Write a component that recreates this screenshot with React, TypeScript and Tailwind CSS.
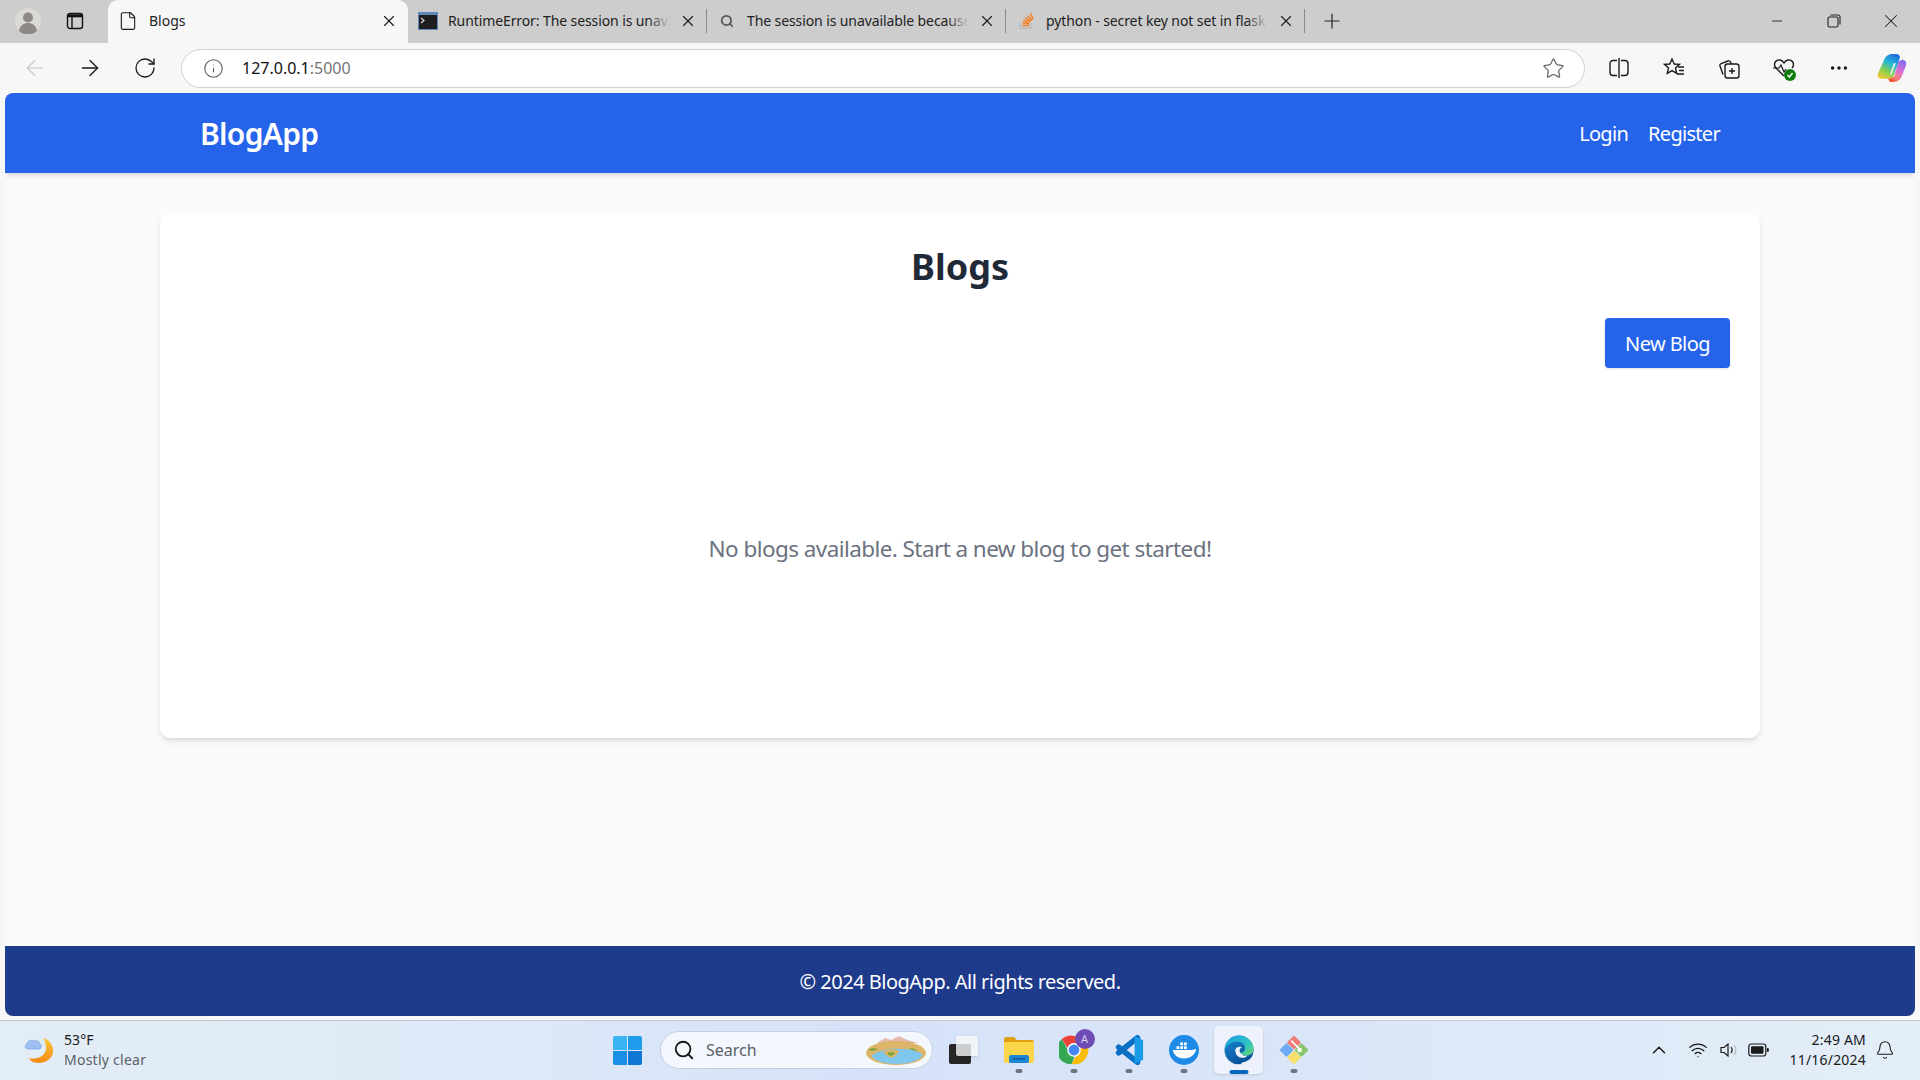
import { ArrowLeft, ArrowRight, RotateCw, Info, Star, X, Plus, Minus, Search, ChevronUp, Wifi, Bell, File, MoreHorizontal } from "lucide-react";

const font = { fontFamily: '"Noto Sans", sans-serif' };

function Tab({ icon, text, active }: { icon: React.ReactNode; text: string; active?: boolean }) {
  return (
    <div className={active ? "relative flex h-[43px] w-[300px] items-center rounded-t-[10px] bg-[#f7f7f7] pb-[2px] pl-[10px] pr-[10px]" : "relative flex h-[43px] w-[299px] items-center pb-[2px] pl-[10px] pr-[10px]"}>
      <span className="flex h-[20px] w-[20px] shrink-0 items-center justify-center">{icon}</span>
      <span className={active ? "relative ml-[11px] w-[221px] overflow-hidden whitespace-nowrap text-[14px] text-[#222]" : "relative ml-[10px] w-[222px] overflow-hidden whitespace-nowrap text-[14px] tracking-[-0.1px] text-[#222]"}>
        {text}
        {!active && <span className="absolute inset-y-0 right-0 w-[22px] bg-[linear-gradient(90deg,rgba(205,205,205,0),#cdcdcd)]" />}
      </span>
      <X className="ml-auto h-[18px] w-[18px] text-[#1a1a1a]" strokeWidth={1.5} />
      {!active && <span className="absolute right-0 top-[9px] h-[24px] w-px bg-[#8a8a8a]" />}
    </div>
  );
}

function ToolIcon({ children, w = 55 }: { children: React.ReactNode; w?: number }) {
  return <div className="flex h-[38px] items-center justify-center" style={{ width: w }}>{children}</div>;
}

function Slot({ children, dot, active }: { children: React.ReactNode; dot?: boolean; active?: boolean }) {
  return (
    <div className="relative flex h-[48px] w-[55px] items-center justify-center">
      {active && <span className="absolute inset-y-0 left-[3px] right-[3px] rounded-[5px] bg-[#edf2fc] shadow-sm" />}
      <span className="relative flex">{children}</span>
      {dot && <span className="absolute bottom-[1px] left-1/2 h-[4px] w-[7px] -translate-x-1/2 rounded-full bg-[#6e7480]" />}
      {active && <span className="absolute bottom-0 left-1/2 h-[4px] w-[19px] -translate-x-1/2 rounded-full bg-[#0067c0]" />}
    </div>
  );
}

export default function App() {
  return (
    <div className="flex h-[1080px] w-[1920px] flex-col overflow-hidden bg-[#f7f7f7]" style={font}>
      {/* tab strip */}
      <div className="flex h-[43px] shrink-0 items-center bg-[#cdcdcd]">
        <div className="flex h-full w-[56px] items-center justify-center pb-[2px]">
          <svg width="26" height="26" viewBox="0 0 26 26"><circle cx="13" cy="13" r="13" fill="#dcdad6" /><circle cx="13" cy="9.5" r="5" fill="#8d8a85" /><path d="M4 23c1-6 5-8 9-8s8 2 9 8a13 13 0 0 1-18 0z" fill="#8d8a85" /></svg>
        </div>
        <div className="flex h-full w-[38px] items-center justify-center pb-[2px]">
          <svg width="18" height="18" viewBox="0 0 18 18" fill="none" stroke="#111" strokeWidth="1.4"><rect x="1.5" y="1.5" width="15" height="15" rx="2.5" /><path d="M6 5v11" /><path d="M1.500 3.800h15" strokeWidth="3" /></svg>
        </div>
        <div className="w-[14px]" />
        <Tab active text="Blogs" icon={<File className="h-[20px] w-[20px] text-[#1a1a1a]" strokeWidth={1.3} />} />
        <Tab text="RuntimeError: The session is unava" icon={
          <svg width="20" height="18" viewBox="0 0 20 18"><rect width="20" height="18" fill="#5f88b8" /><rect x="1" y="3" width="18" height="14" fill="#1e1e1e" /><path d="M3 6l3 2.500L3 11" stroke="#ddd" fill="none" strokeWidth="1.200" /></svg>
        } />
        <Tab text="The session is unavailable because" icon={<Search className="h-[14px] w-[14px] text-[#555]" strokeWidth={3} />} />
        <Tab text="python - secret key not set in flask" icon={
          <svg width="16" height="18" viewBox="0 0 16 18" fill="none"><path d="M2 11v5h11v-5" stroke="#bcbbbb" strokeWidth="1.600" /><path d="M4 13.400h7M4.300 10.800l7 .9M5.200 8.200l6.600 2M6.900 5.600l5.800 3.600M9.400 3.400l4.600 5M12.400 1.400l2.800 6" stroke="#f48024" strokeWidth="1.500" /></svg>
        } />
        <div className="flex h-full w-[54px] items-center justify-center pb-[2px]">
          <Plus className="h-[24px] w-[24px] text-[#222]" strokeWidth={1.2} />
        </div>
        <div className="ml-auto flex h-full items-center pb-[2px] pr-[1px]">
          <div className="flex w-[57px] justify-center"><Minus className="h-[16px] w-[16px] text-[#222]" strokeWidth={1.300} /></div>
          <div className="flex w-[57px] justify-center">
            <svg width="14" height="14" viewBox="0 0 14 14" fill="none" stroke="#222" strokeWidth="1.100"><rect x="1" y="3" width="10" height="10" rx="1.600" /><path d="M3.500 1h7.500A2 2 0 0 1 13 3v7.500" /></svg>
          </div>
          <div className="flex w-[57px] justify-center"><X className="h-[22px] w-[22px] text-[#222]" strokeWidth={1.100} /></div>
        </div>
      </div>

      {/* toolbar */}
      <div className="flex h-[50px] shrink-0 items-center bg-[#f7f7f7] pl-[7px]">
        <ToolIcon><ArrowLeft className="h-[26px] w-[26px] text-[#c6c6c6]" strokeWidth={1.100} /></ToolIcon>
        <ToolIcon><ArrowRight className="h-[26px] w-[26px] text-[#1a1a1a]" strokeWidth={1.200} /></ToolIcon>
        <ToolIcon><RotateCw className="h-[24px] w-[24px] text-[#1a1a1a]" strokeWidth={1.300} /></ToolIcon>
        <div className="ml-[9px] flex h-[39px] w-[1404px] items-center rounded-full border border-[#d0d0d0] bg-white pl-[21px] pr-[19px]">
          <Info className="h-[21px] w-[21px] text-[#555]" strokeWidth={1.200} />
          <span className="ml-[18px] text-[16px] text-[#111]">127.0.0.1<span className="text-[#767676]">:5000</span></span>
          <Star className="ml-auto h-[23px] w-[23px] text-[#666]" strokeWidth={1.300} />
        </div>
        <div className="ml-[6px] flex items-center">
          <ToolIcon>
            <svg width="24" height="24" viewBox="0 0 24 24" fill="none" stroke="#1a1a1a" strokeWidth="1.400"><path d="M10 4.500H6A3 3 0 0 0 3 7.500v9a3 3 0 0 0 3 3h4" /><path d="M14 4.500h4a3 3 0 0 1 3 3v9a3 3 0 0 1-3 3h-4" /><path d="M12 2v20" /></svg>
          </ToolIcon>
          <ToolIcon>
            <svg width="24" height="24" viewBox="0 0 24 24" fill="none" stroke="#1a1a1a" strokeWidth="1.400"><path d="M10 3l2.200 5 5.300.4-4 3.500 1.200 5.400L10 14.600l-4.700 2.700 1.200-5.400-4-3.500 5.300-.4z" /><path d="M16 11h6M17 14.500h5M15 18h7" /></svg>
          </ToolIcon>
          <ToolIcon>
            <svg width="24" height="24" viewBox="0 0 24 24" fill="none" stroke="#1a1a1a" strokeWidth="1.400"><rect x="8" y="8" width="14" height="14" rx="2.500" /><path d="M15 12v6M12 15h6" /><path d="M6 18.500L3 10c-.3-1 .2-2 1.200-2.300L11 5c1.200-.4 2.200 0 2.800 1.500l.7 1.500" /></svg>
          </ToolIcon>
          <ToolIcon>
            <svg width="26" height="26" viewBox="0 0 26 26" fill="none"><path d="M13 21l-8-8c-5-6 4-12 8-5 4-7 13-1 8 5" stroke="#1a1a1a" strokeWidth="1.400" /><path d="M2 13h6l2-3 3 7 2-3" stroke="#1a1a1a" strokeWidth="1.200" /><circle cx="19" cy="20" r="6" fill="#107c10" /><path d="M16.500 20l2 2 3-4" stroke="#fff" strokeWidth="1.400" /></svg>
          </ToolIcon>
          <ToolIcon><MoreHorizontal className="h-[22px] w-[22px] text-[#1a1a1a]" strokeWidth={1.800} /></ToolIcon>
          <ToolIcon w={52}>
            <svg width="30" height="30" viewBox="0 0 28 28" fill="none">
              <defs>
                <linearGradient id="cpA" x1="0.700" y1="0" x2="0.200" y2="1"><stop offset="0" stopColor="#1f6fe0" /><stop offset=".35" stopColor="#27b7d6" /><stop offset=".7" stopColor="#8fd04a" /><stop offset="1" stopColor="#f2c83c" /></linearGradient>
                <linearGradient id="cpB" x1="0.800" y1="0" x2="0.300" y2="1"><stop offset="0" stopColor="#7f6cf0" /><stop offset=".45" stopColor="#d86fd8" /><stop offset=".8" stopColor="#f77f7f" /><stop offset="1" stopColor="#f4572f" /></linearGradient>
              </defs>
              <path d="M24 6c3 1 4 3 3 6l-4 10c-1.500 3.500-4 5-8 5h-3l-2-4 6-1 4-14z" fill="url(#cpB)" />
              <path d="M15 1h3c2 0 3 1 3.500 3L16 20c-1 3-3 4-6 4H4c-3 0-4-2-3-5L6 8c1.500-4.500 4-7 9-7z" fill="url(#cpA)" />
              <path d="M17.500 10l-4 10c-.4 1-1.400.6-1.200-.4L15.500 10c.4-1 2.300-1 2 0z" fill="#fff" fillOpacity=".85" />
            </svg>
          </ToolIcon>
        </div>
      </div>

      {/* page */}
      <div className="flex min-h-0 flex-1 px-[5px] pb-[4px]">
        <div className="flex flex-1 flex-col overflow-hidden rounded-[8px] bg-[#f9fafb]">
          <header className="flex h-[80px] shrink-0 items-center justify-between bg-[#2563eb] pl-[195px] pr-[195px] pt-[1px] shadow-md">
            <span className="text-[30px] font-semibold tracking-[-0.7px] text-white">BlogApp</span>
            <nav className="flex gap-[20px] text-[20px] tracking-[-0.7px] text-white">
              <span>Login</span>
              <span>Register</span>
            </nav>
          </header>
          <main className="flex-1 pt-[40px]">
            <div className="mx-auto flex h-[525px] w-[1600px] flex-col rounded-[10px] bg-white px-[30px] pt-[24px] shadow-md">
              <h1 className="text-center text-[36px] leading-[60px] font-bold text-[#1f2937]">Blogs</h1>
              <div className="mt-[21px] flex justify-end">
                <button className="h-[50px] w-[125px] rounded-[4px] bg-[#2563eb] pt-[1px] text-[20px] tracking-[-0.6px] text-white shadow-sm">New Blog</button>
              </div>
              <p className="mt-[163px] text-center text-[22.5px] leading-[36px] tracking-[-0.57px] text-[#6b7280]">No blogs available. Start a new blog to get started!</p>
            </div>
          </main>
          <footer className="flex h-[70px] shrink-0 items-center justify-center bg-[#1e3a8a] pt-[1px] text-[20px] tracking-[-0.5px] text-white">© 2024 BlogApp. All rights reserved.</footer>
        </div>
      </div>

      {/* taskbar */}
      <div className="relative flex h-[60px] shrink-0 items-center border-t border-[#c4c9d2] bg-[linear-gradient(90deg,#e3edf7_0%,#e0eaf7_20%,#d5e2f9_45%,#dbe6f8_70%,#e3eef8_100%)] pb-[2px]">
        <div className="flex items-center pl-[24px]">
          <svg width="30" height="30" viewBox="0 0 30 30" fill="none">
            <defs><linearGradient id="mn" x1="0" y1="0" x2="0" y2="1"><stop offset="0" stopColor="#fbc83e" /><stop offset="1" stopColor="#f28a12" /></linearGradient></defs>
            <path d="M19 3c8 2 11 9 10 15-2 8-12 12-20 9-2-1-3-2-4-4 8 2 17-2 17-10 0-4-1-7-3-10z" fill="url(#mn)" />
            <path d="M4 14c-3 0-4-4-1-5 0-3 4-5 7-3 2-1 6 0 6 3 2 1 2 5-1 5z" fill="#9dbff2" stroke="#6f9be0" strokeWidth=".600" />
          </svg>
          <div className="ml-[10px] flex flex-col">
            <span className="text-[14px] leading-[20px] tracking-[0.1px] text-[#1a1a1a]">53°F</span>
            <span className="text-[14px] leading-[20px] tracking-[0.25px] text-[#5a5f66]">Mostly clear</span>
          </div>
        </div>

        <div className="absolute left-[613px] top-[5px] flex items-center">
          <div className="grid h-[29px] w-[29px] grid-cols-2 gap-[1px]">
            <span className="rounded-tl-[2px] bg-[#3ab4f2]" /><span className="rounded-tr-[2px] bg-[#1f9ceb]" /><span className="rounded-bl-[2px] bg-[#1a8fe6]" /><span className="rounded-br-[2px] bg-[#0f78d4]" />
          </div>
          <div className="ml-[18px] flex h-[38px] w-[273px] items-center rounded-full border border-[#c6d0e2] bg-[#f3f7fe] pl-[12px]">
            <Search className="h-[22px] w-[22px] text-[#1a1a1a]" strokeWidth={2} />
            <span className="ml-[11px] text-[16px] text-[#5a5f66]">Search</span>
            <svg className="ml-auto mr-[5px]" width="62" height="32" viewBox="0 0 62 32">
              <path d="M12 9l8-5 6 2 8-4 8 4 12 3z" fill="#e3b9a8" />
              <ellipse cx="31" cy="19" rx="30" ry="12" fill="#dcb568" />
              <path d="M6 22c8-6 20-8 30-7 6 0 14 0 22 6-4 6-14 9-26 9-12 0-22-3-26-8z" fill="#7fc6ec" />
              <path d="M18 18c5-3 12-3 16-1-2 5-7 8-10 6-2-1-4-3-6-5z" fill="#dcb568" />
              <path d="M3 16c3-2 7-2 10-1-3 2-7 2-10 1zM22 19c2-1 6-1 8 0-1 2-3 3-5 3zM44 14c3 0 7 1 9 3-3 0-7-1-9-3z" fill="#78a83c" />
            </svg>
          </div>
          <div className="ml-[3px] flex">
            <Slot>
              <span className="relative block h-[28px] w-[29px]">
                <span className="absolute bottom-0 left-0 h-[20px] w-[22px] rounded-[2px] bg-[#262626]" />
                <span className="absolute right-0 top-0 h-[20px] w-[22px] rounded-[2px] bg-[#f6f7f9]/80 shadow-sm" />
              </span>
            </Slot>
            <Slot dot>
              <svg width="30" height="26" viewBox="0 0 30 26"><path d="M0 2a2 2 0 0 1 2-2h8l3 3h15a2 2 0 0 1 2 2v8H0z" fill="#e0a010" /><path d="M0 5h30v19a2 2 0 0 1-2 2H2a2 2 0 0 1-2-2z" fill="#fcd54a" /><rect x="5" y="18" width="20" height="8" rx="2" fill="#1b86d4" /><rect x="9" y="21" width="12" height="1.600" fill="#0f5da0" /></svg>
            </Slot>
            <Slot dot>
              <span className="relative block h-[30px] w-[30px]">
                <svg width="30" height="30" viewBox="0 0 32 32">
                  <path d="M16 1a15 15 0 0 1 13 7.500H16a7.500 7.500 0 0 0-7 5L3 4.500A15 15 0 0 1 16 1z" fill="#ea4335" />
                  <path d="M3 4.500l6.500 11.500a7.500 7.500 0 0 0 8 4L13.500 31A15 15 0 0 1 3 4.500z" fill="#34a853" />
                  <path d="M29 8.500A15 15 0 0 1 13.500 31l6-11a7.500 7.500 0 0 0 2-11.500z" fill="#fbbc05" />
                  <circle cx="16" cy="16" r="6.500" fill="#4285f4" stroke="#fff" strokeWidth="1.500" />
                </svg>
                <span className="absolute -right-[6px] -top-[6px] flex h-[20px] w-[20px] items-center justify-center rounded-full bg-[#6f4cb5] text-[11px] text-[#d9cdf0]">A</span>
              </span>
            </Slot>
            <Slot dot>
              <svg width="30" height="30" viewBox="0 0 32 32" fill="none">
                <path d="M25 3L5 19M25 29L5 13" stroke="#0a6fc2" strokeWidth="6" strokeLinecap="round" />
                <path d="M22 1l9 4.500v21L22 31z" fill="#1a9bea" />
              </svg>
            </Slot>
            <Slot dot>
              <svg width="30" height="30" viewBox="0 0 32 32"><circle cx="16" cy="16" r="16" fill="#1d8be6" /><path d="M4 16h20c2 0 3-1 5-1-1 6-6 10-13 10-7 0-11-4-12-9z" fill="#fff" /><path d="M8 12h3v3H8zM12 12h3v3h-3zM16 12h3v3h-3zM12 8h3v3h-3zM16 8h3v3h-3z" fill="#fff" /></svg>
            </Slot>
            <Slot active>
              <svg width="30" height="30" viewBox="0 0 32 32">
                <defs>
                  <linearGradient id="e1" x1="0" y1="0" x2="1" y2="1"><stop offset="0" stopColor="#1b9de2" /><stop offset=".6" stopColor="#2fc5c2" /><stop offset="1" stopColor="#6bd66a" /></linearGradient>
                  <linearGradient id="e2" x1="0" y1="0" x2="0.600" y2="1"><stop offset="0" stopColor="#1a8fd8" /><stop offset="1" stopColor="#0a4f96" /></linearGradient>
                </defs>
                <circle cx="16" cy="16" r="15.500" fill="url(#e2)" />
                <path d="M1 15C2 6 8 0.500 16 0.500c9 0 15.500 7 15.500 14.500 0 5-4 7-8 7-3 0-6-1-6-3 3 0 5-2 5-5 0-4-4-7-9-7-6 0-11 4-12.500 8.500z" fill="url(#e1)" />
                <path d="M31 21c-2 6-8 11-15 11-1 0-2 0-3-.5 2 .5 6-1 7-2.500 3 0 9-3 11-8z" fill="#edf2fc" />
                <path d="M12 16c1-3 4-4 7-3-2 1-3 3-2 5 1 3 5 5 8 4-3 3-7 3-10 1-2-2-3-4-3-7z" fill="#edf2fc" />
              </svg>
            </Slot>
            <Slot dot>
              <svg width="30" height="30" viewBox="0 0 32 32" fill="none">
                <path d="M16 14.500L9.500 8 16 1.500 22.500 8z" fill="#ef7a76" stroke="#ef7a76" strokeWidth="1.500" strokeLinejoin="round" />
                <path d="M17.500 16L24 9.500 30.500 16 24 22.500z" fill="#8cc56a" stroke="#8cc56a" strokeWidth="1.500" strokeLinejoin="round" />
                <path d="M16 17.500l6.500 6.500-6.500 6.500L9.500 24z" fill="#f5e06e" stroke="#f5e06e" strokeWidth="1.500" strokeLinejoin="round" />
                <path d="M14.500 16L8 22.500 1.500 16 8 9.500z" fill="#6eaaf5" stroke="#6eaaf5" strokeWidth="1.500" strokeLinejoin="round" />
                <path d="M13 6l9 9" stroke="#fff" strokeWidth="1.800" />
                <circle cx="22" cy="16" r="2.500" fill="#fff" />
              </svg>
            </Slot>
          </div>
        </div>

        <div className="ml-auto flex items-center pr-[25px]">
          <ChevronUp className="h-[22px] w-[22px] text-[#1a1a1a]" strokeWidth={1.600} />
          <Wifi className="ml-[18px] h-[20px] w-[20px] text-[#1a1a1a]" strokeWidth={1.500} />
          <svg className="ml-[11px]" width="20" height="20" viewBox="0 0 20 20" fill="none" stroke="#1a1a1a" strokeWidth="1.200"><path d="M2 7.500h3L9 4v12l-4-3.500H2z" /><path d="M12 7c1.300 1.700 1.300 4.300 0 6" /><path d="M15 5c2.300 3 2.300 7 0 10" stroke="#b8b8b8" /></svg>
          <svg className="ml-[9px]" width="21" height="14" viewBox="0 0 21 14"><rect x=".8" y="1" width="17" height="12" rx="2.500" fill="none" stroke="#1a1a1a" strokeWidth="1.200" /><rect x="3" y="3.200" width="12.500" height="7.600" rx="1" fill="#1a1a1a" /><rect x="18.800" y="5" width="2" height="4" rx="1" fill="#1a1a1a" /></svg>
          <div className="ml-[13px] flex w-[84px] flex-col items-end text-[14px] leading-[20px] tracking-[0.2px] text-[#1a1a1a]">
            <span>2:49 AM</span>
            <span>11/16/2024</span>
          </div>
          <Bell className="ml-[9px] h-[20px] w-[20px] text-[#1a1a1a]" strokeWidth={1.300} />
        </div>
      </div>
    </div>
  );
}
